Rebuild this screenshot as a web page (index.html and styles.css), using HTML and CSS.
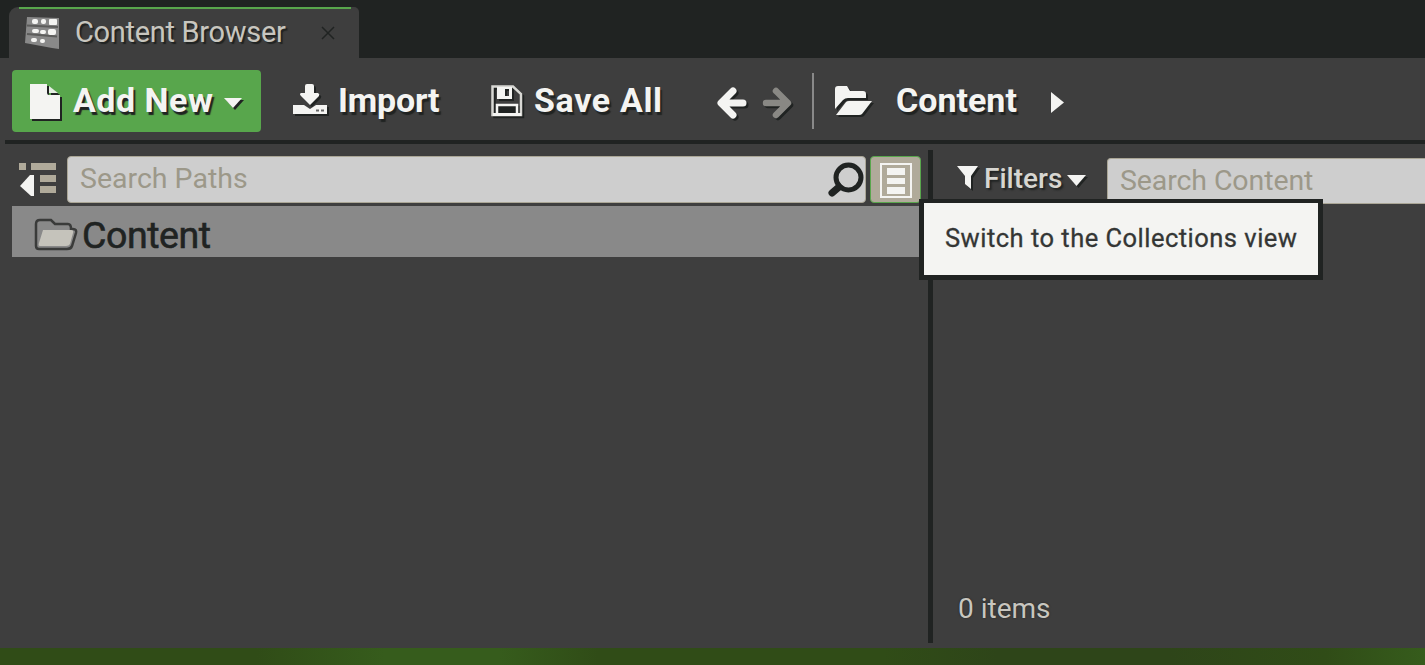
FILE: index.html
```html
<!DOCTYPE html>
<html lang="en">
<head>
<meta charset="utf-8">
<title>Content Browser</title>
<link rel="stylesheet" href="styles.css">
</head>
<body>
<div class="window">
  <header class="tabbar">
    <div class="tab">
      <svg class="tab-icon" width="38" height="36" viewBox="0 0 38 36"><path d="M4 1L36 2V33L29 32L2 27Z" fill="#898989"/><path d="M4 9.500L35 11M4 18L34 20.500" stroke="#5c5c5b" stroke-width="2"/><g fill="#f4f4f2"><rect x="9" y="3" width="6" height="5" rx="2"/><rect x="18" y="3" width="5" height="5" rx="2"/><rect x="26" y="3" width="8" height="6" rx="1"/><rect x="9" y="13" width="7" height="4" rx="2"/><rect x="17" y="14" width="6" height="4" rx="2"/><rect x="25" y="13" width="8" height="6" rx="2"/><rect x="8" y="22" width="6" height="4" rx="2"/><rect x="17" y="23" width="5" height="4" rx="2"/></g></svg>
      <span class="tab-title">Content Browser</span>
      <svg class="tab-close" width="14" height="14" viewBox="0 0 14 14"><path d="M1 1L13 13M13 1L1 13" stroke="#202322" stroke-width="1.500"/></svg>
    </div>
  </header>

  <nav class="toolbar">
    <button class="add-new">
      <svg class="icon-shadow" width="32" height="36" viewBox="0 0 32 36"><path d="M1 0H18V9Q18 11 20 11H31V35H1Z" fill="#f4f4f2"/><path d="M20 2V9H29Z" fill="#e5efe2"/></svg>
      <span class="label add-label">Add New</span>
      <svg class="icon-shadow add-caret" width="18" height="11" viewBox="0 0 18 11"><path d="M0 0H18L9 10Z" fill="#f4f4f2"/></svg>
    </button>
    <svg class="icon-shadow import-icon" width="34" height="32" viewBox="0 0 34 32"><path d="M12 2Q12 0 14 0H19Q21 0 21 2V9H25Q27 10 26 12L17 21L8 12Q6 10 8 9H12Z" fill="#f4f4f2"/><path d="M0 21H11L17 25L23 21H34V30H0Z" fill="#f4f4f2"/><path d="M23 26.500h3M28 26.500h3" stroke="#666" stroke-width="2"/></svg>
    <span class="label import-label">Import</span>
    <svg class="icon-shadow save-icon" width="32" height="32" viewBox="0 0 32 32"><path d="M1.500 1.500H22L30 9V30H1.500Z" fill="none" stroke="#d8d8d4" stroke-width="2.500"/><path d="M6 2H21V14H6ZM14 4V11H18V4Z" fill="#f4f4f2" fill-rule="evenodd"/><path d="M6 30V20H26V30" fill="#202322" stroke="#f4f4f2" stroke-width="2.500"/><path d="M2 29.500H30" stroke="#f4f4f2" stroke-width="3"/></svg>
    <span class="label save-label">Save All</span>
    <svg class="icon-shadow back-icon" width="31" height="32" viewBox="0 0 31 32"><path d="M17 4L5 16L17 28M6 16H27" fill="none" stroke="#f4f4f2" stroke-width="7" stroke-linecap="round" stroke-linejoin="round"/></svg>
    <svg class="icon-shadow forward-icon" width="31" height="32" viewBox="0 0 31 32"><path d="M14 4L26 16L14 28M25 16H4" fill="none" stroke="#898884" stroke-width="6.500" stroke-linecap="round" stroke-linejoin="round"/></svg>
    <span class="nav-rule"></span>
    <svg class="icon-shadow folder-icon" width="39" height="31" viewBox="0 0 39 31"><path d="M0 23V3Q0 0 3 0H12L15 5H28Q31 5 31 8V12H13Q10 12 8 14Z" fill="#f4f4f2"/><path d="M1 29L11 16Q12 15 14 15H37L27 28Q26 29 24 29Z" fill="#f4f4f2"/></svg>
    <span class="label crumb">Content</span>
    <svg class="crumb-arrow" width="13" height="21" viewBox="0 0 13 21"><path d="M1 0L14 10.500L1 21Z" fill="#f4f4f2"/></svg>
  </nav>

  <main class="panels">
    <section class="paths">
      <div class="search-row">
        <svg class="collapse" width="40" height="36" viewBox="0 0 40 36"><path d="M0 1h7v7H0zM12 1h25v7H12zM21 13h16v7H21zM21 24h16v7H21z" fill="#b0aa9a"/><path d="M1 24L11 13H15V34H12Z" fill="#f4f4f2"/></svg>
        <div class="search path-search">
          <span class="search-text">Search Paths</span>
          <svg width="36" height="38" viewBox="0 0 36 38"><circle cx="21.500" cy="15.500" r="12.500" fill="none" stroke="#202322" stroke-width="5"/><path d="M12 25L5 31" stroke="#202322" stroke-width="7" stroke-linecap="round"/></svg>
        </div>
        <div class="view-toggle">
          <svg width="33" height="36" viewBox="0 0 33 36"><rect x="1" y="1" width="30" height="33" fill="none" stroke="#f4f4f2" stroke-width="2"/><path d="M7 5h18v7H7zM7 15h18v6H7zM7 24h18v7H7z" fill="#f4f4f2"/></svg>
        </div>
      </div>
      <div class="tree-row">
        <svg width="44" height="34" viewBox="0 0 44 34"><path d="M2 28V6Q2 2 6 2H17L21 6H34Q37 6 37 11H39Q43 11 42 15L38 28Q37 31 33 31H5Q2 31 2 28Z" fill="#898989" stroke="#3a3b3a" stroke-width="2.500"/><path d="M9 12H37Q40 12 39 15L36 26Q35 28 32 28H6Q4 28 5 25Z" fill="#c5c3bb"/></svg>
        <span class="tree-text">Content</span>
      </div>
    </section>
    <div class="divider"></div>
    <section class="assets">
      <div class="filter-row">
        <svg class="icon-shadow funnel" width="23" height="25" viewBox="0 0 23 25"><path d="M0 0H21L14 10V23L8 18V10Z" fill="#f4f4f2"/></svg>
        <span class="filters">Filters</span>
        <svg class="icon-shadow filter-caret" width="20" height="12" viewBox="0 0 20 12"><path d="M0 0H19L9.500 11Z" fill="#f4f4f2"/></svg>
        <div class="search content-search"><span class="content-search-text">Search Content</span></div>
      </div>
      <div class="status">0 items</div>
      <div class="tooltip"><span class="tooltip-text">Switch to the Collections view</span></div>
    </section>
  </main>
  <footer class="backdrop"></footer>
</div>
</body>
</html>
```
FILE: styles.css
```css
* { box-sizing: border-box; }
body {
  margin: 0;
  overflow: hidden;
  font-family: Roboto, "Liberation Sans", sans-serif;
}
svg { display: block; flex: none; overflow: visible; }
.window {
  display: flex;
  flex-direction: column;
  width: 1425px;
  height: 665px;
  background: #3e3e3e;
  white-space: nowrap;
}
.tabbar {
  height: 58px;
  flex: none;
  padding: 7px 0 0 9px;
  background: #202322;
}
.tab {
  display: flex;
  align-items: flex-start;
  width: 350px;
  height: 51px;
  padding-left: 14px;
  border-radius: 9px 5px 0 0;
  background: linear-gradient(#58a64c, #58a64c) 10px 0 / 332px 2px no-repeat #3e3e3e;
}
.tab-icon { margin-top: 9px; }
.tab-title {
  width: 245px;
  margin: 8px 0 0 14px;
  font-size: 29px;
  line-height: 34px;
  letter-spacing: -0.300px;
  color: #c8c6bf;
  text-shadow: 2px 2px 1px #202322;
}
.tab-close { margin: 19px 0 0 1px; }
.toolbar {
  display: flex;
  align-items: flex-start;
  height: 82px;
  flex: none;
  padding: 12px 0 0 12px;
}
.add-new {
  display: flex;
  width: 249px;
  height: 62px;
  padding: 14px 0 0 17px;
  border: 0;
  border-radius: 4px;
  background: #58a64c;
  font-family: inherit;
}
.label {
  flex: none;
  font-size: 34px;
  font-weight: 700;
  line-height: 40px;
  color: #f4f4f2;
  text-shadow: 2px 3px 1px #202322;
}
.icon-shadow { filter: drop-shadow(2px 2px 0.500px #202322); }
.add-label { width: 150px; margin: -4px 0 0 12px; text-align: left; letter-spacing: 0.500px; }
.add-caret { margin: 14px 0 0 1px; }
.import-icon { margin: 14px 0 0 32px; }
.import-label { width: 153px; margin: 10px 0 0 11px; letter-spacing: -0.200px; }
.save-icon { margin-top: 15px; }
.save-label { width: 182px; margin: 10px 0 0 11px; letter-spacing: 0.650px; }
.back-icon { margin-top: 17px; }
.forward-icon { margin: 17px 0 0 15px; }
.nav-rule { width: 2px; height: 56px; margin: 3px 0 0 19px; background: #898989; }
.folder-icon { margin: 16px 0 0 21px; }
.crumb { width: 154px; margin: 10px 0 0 22px; }
.crumb-arrow { margin-top: 22px; }
.panels {
  display: flex;
  height: 508px;
  flex: none;
  border-top: 4px solid #202322;
  margin-left: 5px;
}
.paths { width: 923px; padding: 12px 0 0 7px; }
.search-row { display: flex; height: 50px; padding-left: 7px; }
.collapse { margin-top: 6px; }
.search {
  height: 47px;
  border: 1px solid #aaa696;
  border-radius: 4px;
  background: #cecece;
}
.path-search {
  display: flex;
  width: 799px;
  margin-left: 8px;
  padding: 5px 0 0 12px;
}
.search-text { width: 747px; font-size: 28.500px; line-height: 34px; color: #9c9889; }
.view-toggle {
  width: 51px;
  height: 47px;
  margin-left: 4px;
  padding: 6px 0 0 9px;
  border: 1px solid #58a64c;
  border-radius: 4px;
  background: #b0aa9a;
}
.tree-row {
  display: flex;
  height: 51px;
  padding: 12px 0 0 22px;
  background: #898989;
}
.tree-text { margin: -6px 0 0 4px; font-size: 37.500px; line-height: 46px; letter-spacing: -0.450px; color: #202322; -webkit-text-stroke: 0.600px #202322; }
.divider { width: 5px; height: 493px; margin-top: 6px; background: #202322; }
.assets {
  position: relative;
  display: flex;
  flex: 1;
  flex-direction: column;
  justify-content: space-between;
  padding: 14px 0 22px 24px;
}
.filter-row { display: flex; }
.funnel { margin-top: 8px; }
.filters {
  width: 83px;
  margin: 4px 0 0 4px;
  font-size: 28px;
  font-weight: 500;
  line-height: 34px;
  color: #d7d6d1;
  text-shadow: 2px 2px 2px #202322;
}
.filter-caret { margin-top: 17px; }
.content-search {
  flex: 1;
  height: 46px;
  margin-left: 20px;
  padding: 5px 0 0 12px;
  border-right: 0;
  border-radius: 4px 0 0 4px;
}
.content-search-text { font-size: 28.500px; line-height: 34px; letter-spacing: -0.100px; color: #9c9889; }
.status { margin-left: 1px; font-size: 28px; line-height: 34px; color: #c8c6bf; text-shadow: 0 0 2px #202322; }
.tooltip {
  position: absolute;
  left: -14px;
  top: 55px;
  width: 404px;
  height: 81px;
  padding: 19px 0 0 21px;
  border: solid #202322;
  border-width: 4px 5px 5px 5px;
  background: #f4f4f2;
}
.tooltip-text { font-size: 25.500px; line-height: 32px; letter-spacing: 0.480px; color: #343635; -webkit-text-stroke: 0.300px #343635; }
.backdrop {
  flex: 1;
  background: linear-gradient(90deg, #304c17 18%, #365c1c 27%, #365c1c 35%, #304c17 42%, #304c17 62%, #2e4519 70%, #2e4519 82%, #304c17 93%, #365c1c);
}
```
